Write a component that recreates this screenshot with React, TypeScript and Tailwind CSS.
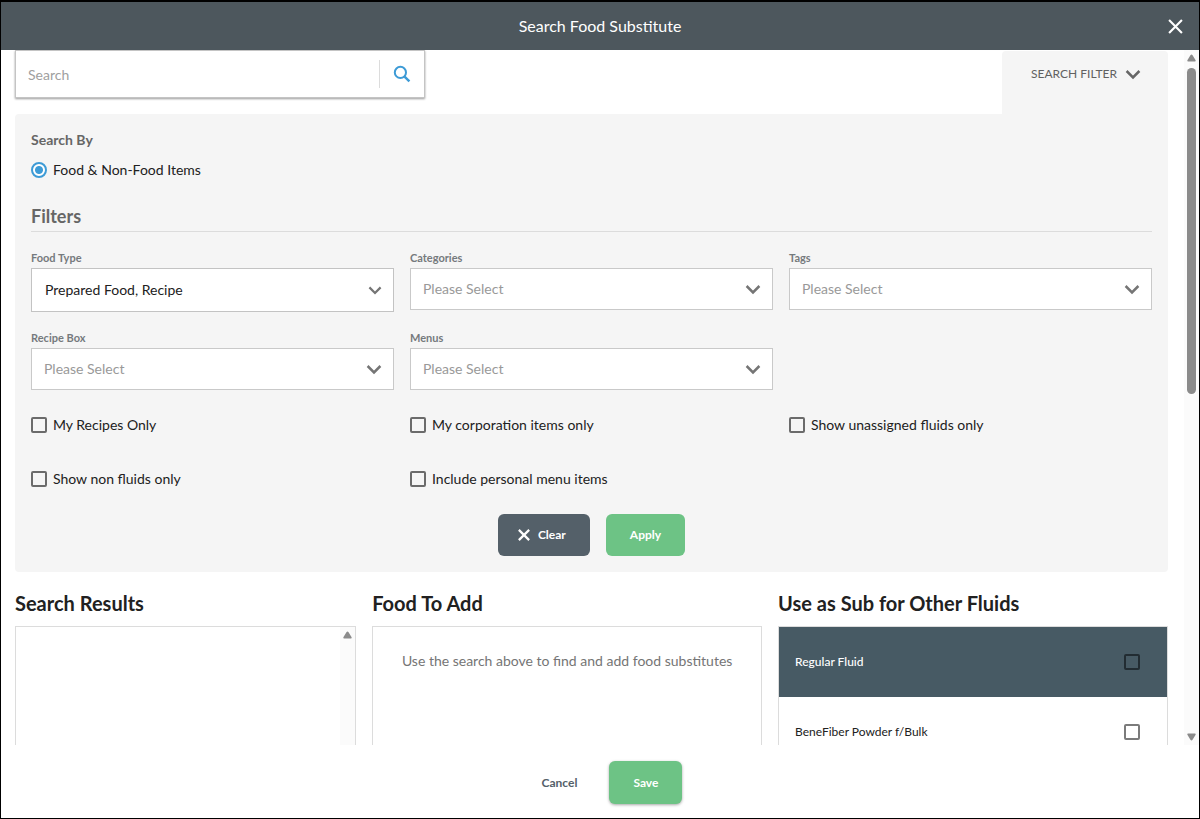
import { useId, useState } from "react";

const checkboxFilters = [
  "My Recipes Only",
  "My corporation items only",
  "Show unassigned fluids only",
  "Show non fluids only",
  "Include personal menu items",
];

const fluids = [
  { name: "Regular Fluid", active: true },
  { name: "BeneFiber Powder f/Bulk", active: false },
];

function Chevron({ size = 16, className = "" }: { size?: number; className?: string }) {
  return (
    <svg
      width={size}
      height={size}
      viewBox="0 0 16 16"
      fill="none"
      stroke="currentColor"
      strokeWidth="2.5"
      className={className}
      aria-hidden="true"
    >
      <path d="M1.6 5 L8 11.4 L14.4 5" />
    </svg>
  );
}

function Cross({ size, stroke }: { size: number; stroke: number }) {
  return (
    <svg width={size} height={size} viewBox="0 0 14 14" fill="none" stroke="currentColor" strokeWidth={stroke} aria-hidden="true">
      <path d="M1 1 L13 13 M13 1 L1 13" />
    </svg>
  );
}

function Arrow({ down = false }: { down?: boolean }) {
  return (
    <svg width="9" height="8" viewBox="0 0 10 8" preserveAspectRatio="none" fill="#8b8b8b" aria-hidden="true">
      {down ? (
        <path d="M1.2 0.5 H8.8 Q10.2 0.7 9.4 1.9 L6.2 6.8 Q5 8 3.8 6.8 L0.6 1.9 Q-0.2 0.7 1.2 0.5Z" />
      ) : (
        <path d="M1.2 7.5 H8.8 Q10.2 7.3 9.4 6.1 L6.2 1.2 Q5 0 3.8 1.2 L0.6 6.1 Q-0.2 7.3 1.2 7.5Z" />
      )}
    </svg>
  );
}

function SelectField({ label, value, filled = false }: { label: string; value: string; filled?: boolean }) {
  const id = useId();
  return (
    <div className="flex h-20 flex-col">
      <label htmlFor={id} className="h-5 text-[11px] leading-5 font-bold text-[#757a7d]">
        {label}
      </label>
      <div className="relative">
        <select
          id={id}
          className={
            filled
              ? "block h-11 w-full appearance-none rounded-none border border-[#c3c3c3] bg-white pr-10 pl-[13px] text-sm text-[#212121]"
              : "block h-[42px] w-full appearance-none rounded-none border border-[#c9c9c9] bg-white pr-10 pl-3 text-sm text-[#999]"
          }
        >
          <option>{value}</option>
        </select>
        <Chevron
          size={filled ? 14 : 16}
          className="pointer-events-none absolute top-1/2 right-3 -translate-y-1/2 text-[#757575]"
        />
      </div>
    </div>
  );
}

function CheckField({ label }: { label: string }) {
  return (
    <label className="flex h-[54px] items-center gap-1.5 text-sm text-[#212121]">
      <input
        type="checkbox"
        className="size-4 shrink-0 appearance-none rounded-[2px] border-2 border-[#6b6b6b] checked:bg-[#3d9bd6]"
      />
      {label}
    </label>
  );
}

export default function App() {
  const [query, setQuery] = useState("");
  return (
    <div className="flex h-screen flex-col border border-black bg-white font-['Lato',sans-serif] text-[#212121]">
      <header className="grid h-[49px] shrink-0 grid-cols-[1fr_auto_1fr] items-center border-t border-black bg-[#4d575d] px-4 text-white">
        <h1 className="col-start-2 text-base font-normal">Search Food Substitute</h1>
        <button type="button" aria-label="Close" className="justify-self-end">
          <Cross size={15} stroke={2} />
        </button>
      </header>

      <main className="flex min-h-0 flex-1">
        <div className="min-w-0 flex-1 overflow-hidden pr-4 pl-3.5">
          <div className="flex h-16 items-start justify-between">
            <form className="flex h-12 w-[410px] items-center border border-[#c4c4c4] bg-white shadow-[0_1px_2px_rgba(0,0,0,0.4)]">
              <input
                type="text"
                aria-label="Search"
                placeholder="Search"
                value={query}
                onChange={(e) => setQuery(e.target.value)}
                className="h-full min-w-0 flex-1 px-3 text-sm outline-none placeholder:text-[#a0a0a0]"
              />
              <button
                type="button"
                aria-label="Run search"
                className="flex h-7 w-[45px] items-center justify-center border-l border-[#dcdcdc] text-[#3d9bd6]"
              >
                <svg width="18" height="18" viewBox="0 0 18 18" fill="none" stroke="currentColor" strokeWidth="2" aria-hidden="true">
                  <circle cx="7.4" cy="7.4" r="5.6" />
                  <path d="M11.3 11.3 L16.4 16.4" strokeWidth="2.4" />
                </svg>
              </button>
            </form>
            <button
              type="button"
              className="mt-px flex h-[63px] w-[166px] justify-center gap-2 rounded-t bg-[#f5f5f5] pt-[15px] pl-0.5 text-xs leading-4 text-[#616161]"
            >
              SEARCH FILTER
              <Chevron className="text-[#666]" />
            </button>
          </div>

          <section className="rounded rounded-tr-none bg-[#f5f5f5] p-4">
            <fieldset>
              <legend className="text-sm leading-5 font-bold text-[#666]">Search By</legend>
              <label className="flex h-10 items-center gap-1.5 text-sm">
                <input
                  type="radio"
                  name="searchBy"
                  defaultChecked
                  className="size-4 appearance-none rounded-full border-2 border-[#3d9bd6] checked:bg-[radial-gradient(circle,#3d9bd6_3.5px,white_4.5px)]"
                />
                Food &amp; Non-Food Items
              </label>
            </fieldset>

            <h2 className="mt-3 h-[30px] border-b border-[#dcdcdc] text-lg leading-7 font-bold text-[#666]">Filters</h2>

            <div className="mt-4 grid grid-cols-3 gap-x-4">
              <SelectField label="Food Type" value="Prepared Food, Recipe" filled />
              <SelectField label="Categories" value="Please Select" />
              <SelectField label="Tags" value="Please Select" />
              <SelectField label="Recipe Box" value="Please Select" />
              <SelectField label="Menus" value="Please Select" />
            </div>

            <div className="-mt-2.5 grid grid-cols-3 gap-x-4">
              {checkboxFilters.map((label) => (
                <CheckField key={label} label={label} />
              ))}
            </div>

            <div className="mt-2 flex justify-center gap-4">
              <button
                type="button"
                className="flex h-[42px] items-center gap-2 rounded-md bg-[#546069] pr-6 pl-5 text-xs font-bold text-white"
              >
                <Cross size={12} stroke={2.6} />
                Clear
              </button>
              <button type="button" className="h-[42px] rounded-md bg-[#6dc385] px-6 text-xs font-bold text-white">
                Apply
              </button>
            </div>
          </section>

          <div className="mt-4 grid grid-cols-[7fr_8fr_8fr] gap-x-4">
            <section>
              <h2 className="mb-2 text-xl leading-[30px] font-bold">Search Results</h2>
              <div className="flex h-[400px] justify-end border border-[#dcdcdc]">
                <div className="flex w-[15px] justify-center bg-[#fbfbfb] pt-1">
                  <Arrow />
                </div>
              </div>
            </section>
            <section>
              <h2 className="mb-2 text-xl leading-[30px] font-bold">Food To Add</h2>
              <div className="h-[400px] border border-[#dcdcdc] px-4 pt-6 text-center text-sm leading-5 text-[#757575]">
                Use the search above to find and add food substitutes
              </div>
            </section>
            <section>
              <h2 className="mb-2 text-xl leading-[30px] font-bold">Use as Sub for Other Fluids</h2>
              <ul className="h-[400px] border border-[#dcdcdc]">
                {fluids.map(({ name, active }) => (
                  <li key={name}>
                    <label
                      className={
                        active
                          ? "flex h-[70px] items-center justify-between bg-[#475a64] pr-[27px] pl-4 text-xs font-medium text-white"
                          : "flex h-[70px] items-center justify-between pr-[27px] pl-4 text-xs"
                      }
                    >
                      {name}
                      <input
                        type="checkbox"
                        className={
                          active
                            ? "size-4 appearance-none rounded-[2px] border-2 border-[#222c32]"
                            : "size-4 appearance-none rounded-[2px] border-2 border-[#7b7b7b]"
                        }
                      />
                    </label>
                  </li>
                ))}
              </ul>
            </section>
          </div>
        </div>

        <div className="flex w-[15px] shrink-0 flex-col items-center bg-[#fbfbfb] pt-1 pb-1" aria-hidden="true">
          <Arrow />
          <div className="mt-1.5 flex w-[9px] flex-1 flex-col">
            <div className="h-[49%] rounded-full bg-[#8b8b8b]" />
          </div>
          <Arrow down />
        </div>
      </main>

      <footer className="flex shrink-0 items-center justify-center gap-2 pt-4 pb-3.5">
        <button type="button" className="h-[43px] px-6 text-xs font-bold text-[#546069]">
          Cancel
        </button>
        <button
          type="button"
          className="h-[43px] rounded-md bg-[#6dc385] px-6 text-xs font-bold text-white shadow-[0_1px_3px_rgba(0,0,0,0.35)]"
        >
          Save
        </button>
      </footer>
    </div>
  );
}
